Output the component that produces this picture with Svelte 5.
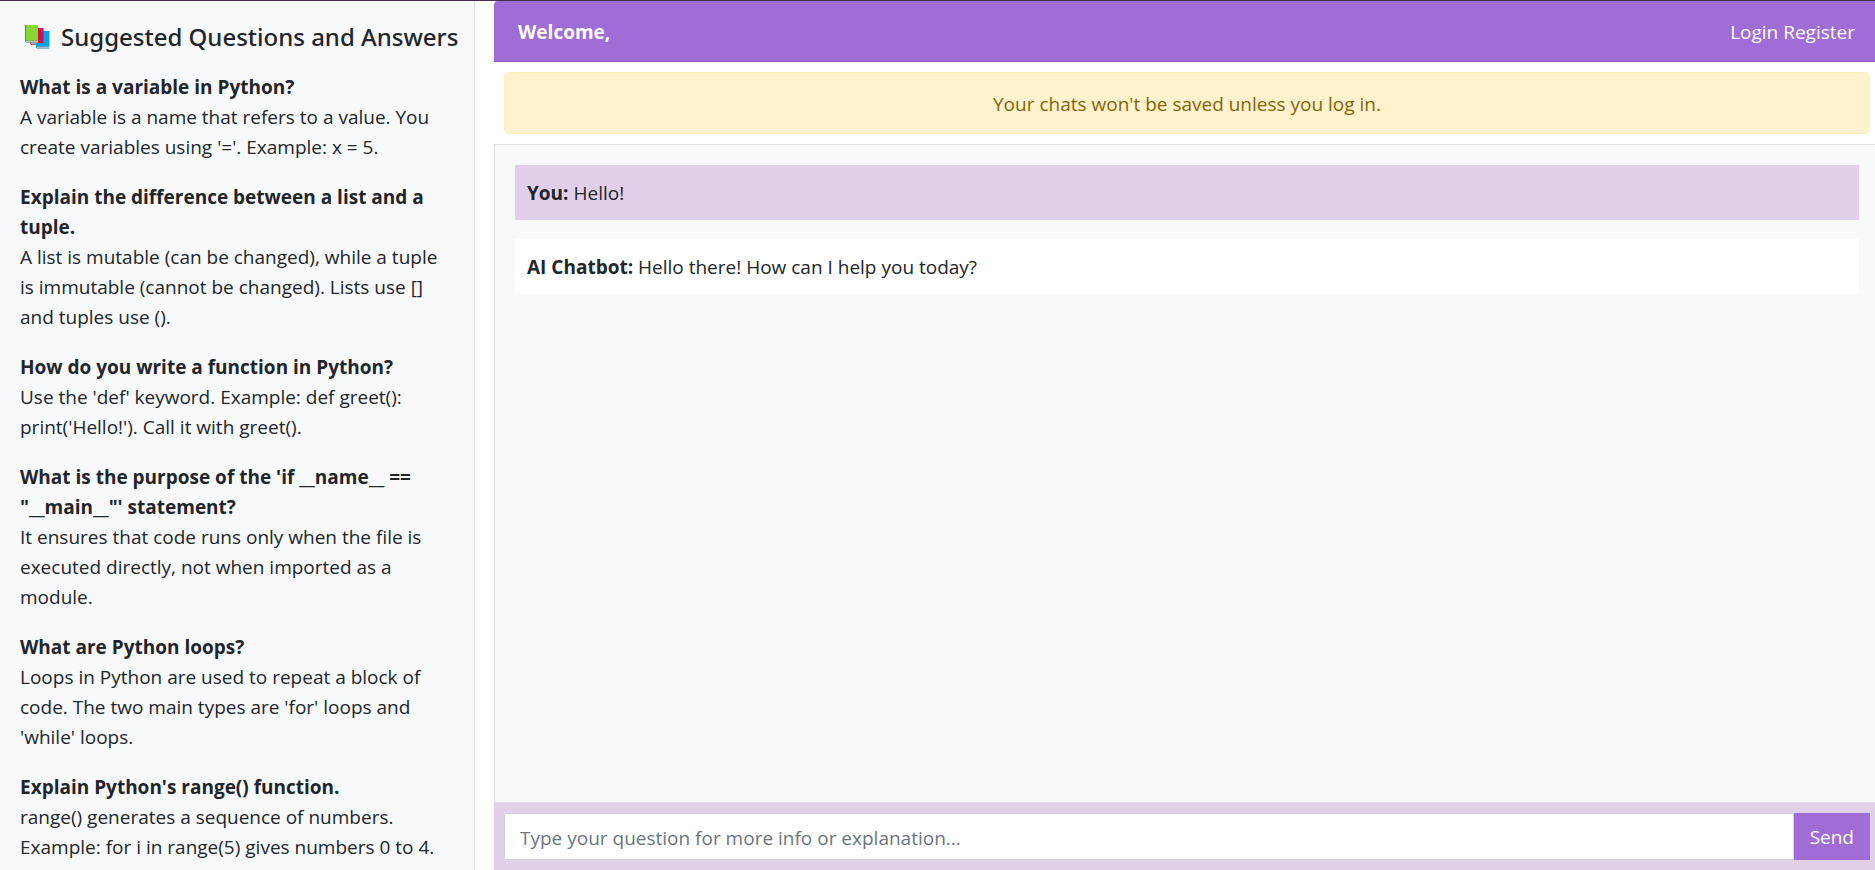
<script>
  const topics = [
    {
      question: 'What is a variable in Python?',
      answer: "A variable is a name that refers to a value. You create variables using '='. Example: x = 5."
    },
    {
      question: 'Explain the difference between a list and a tuple.',
      answer:
        'A list is mutable (can be changed), while a tuple is immutable (cannot be changed). Lists use [] and tuples use ().'
    },
    {
      question: 'How do you write a function in Python?',
      answer: "Use the 'def' keyword. Example: def greet(): print('Hello!'). Call it with greet()."
    },
    {
      question: "What is the purpose of the 'if __name__ == \"__main__\"' statement?",
      answer: 'It ensures that code runs only when the file is executed directly, not when imported as a module.'
    },
    {
      question: 'What are Python loops?',
      answer:
        "Loops in Python are used to repeat a block of code. The two main types are 'for' loops and 'while' loops."
    },
    {
      question: "Explain Python's range() function.",
      answer: 'range() generates a sequence of numbers. Example: for i in range(5) gives numbers 0 to 4.'
    }
  ];

  let messages = $state([
    { from: 'You', text: 'Hello!', own: true },
    { from: 'AI Chatbot', text: 'Hello there! How can I help you today?', own: false }
  ]);
  let draft = $state('');

  function send(event) {
    event.preventDefault();
    const text = draft.trim();
    if (!text) return;
    messages.push({ from: 'You', text, own: true });
    draft = '';
  }
</script>

<div class="page">
  <aside class="sidebar">
    <h2>
      <svg class="books" viewBox="0 0 26 26" aria-hidden="true">
        <path d="M12 7h13.500v15H12z" fill="#00a4ef" />
        <path d="M12 22h13.500v2.500H13L12 23.500z" fill="#c9d3dc" />
        <path d="M12 22h13v.8H13v.9h12.500v.8H13l-1-1z" fill="#3488bb" />
        <path d="M6 4h13.500v15H6z" fill="#d1104f" />
        <path d="M6 18h6v3H7l-1-1z" fill="#dcc5d1" />
        <path d="M6 18h7v.8H7v.9h5v1H7l-1-1z" fill="#a5386a" />
        <path d="M1 1h13v16H1z" fill="#86d72f" />
        <path d="M1 1h1v16H1z" fill="#4a9a20" />
        <path d="M1 16h13v2.500H2l-1-1z" fill="#ccd9ce" />
        <path d="M1 16h13v.8H2v.9h12v.8H2l-1-1z" fill="#6ba157" />
      </svg>
      <span>Suggested Questions and Answers</span>
    </h2>
    {#each topics as topic}
      <section class="topic">
        <h3>{topic.question}</h3>
        <p>{topic.answer}</p>
      </section>
    {/each}
  </aside>

  <main>
    <header>
      <strong>Welcome,</strong>
      <nav><a href="#login">Login</a> <a href="#register">Register</a></nav>
    </header>
    <div class="notice" role="status">Your chats won't be saved unless you log in.</div>
    <div class="chat">
      {#each messages as message}
        <div class="message" class:own={message.own}><strong>{message.from}:</strong> {message.text}</div>
      {/each}
    </div>
    <form onsubmit={send}>
      <input
        type="text"
        aria-label="Your question"
        placeholder="Type your question for more info or explanation..."
        bind:value={draft}
      />
      <button type="submit">Send</button>
    </form>
  </main>
</div>

<style>
  :global(body) {
    margin: 0;
    background: #fff;
  }
  .page,
  .page * {
    box-sizing: border-box;
  }
  .page {
    display: flex;
    gap: 19px;
    height: 100vh;
    overflow: hidden;
    border-top: 1px solid #47304f;
    color: #212529;
    font: 19px/30px 'Segoe UI', 'Open Sans', sans-serif;
  }
  .sidebar {
    flex: 0 0 475px;
    overflow: hidden;
    padding: 20px;
    background: #f8f9fb;
    border-right: 1px solid #dcdee0;
  }
  h2 {
    display: flex;
    align-items: center;
    gap: 11px;
    margin: 0 0 19px;
    padding-left: 4px;
    font-family: 'Segoe UI', 'Noto Sans', 'Open Sans', sans-serif;
    font-size: 24px;
    font-weight: 500;
    line-height: 32px;
    white-space: nowrap;
  }
  .books {
    flex: none;
    width: 26px;
    height: 26px;
  }
  .topic {
    margin-bottom: 20px;
  }
  h3,
  p {
    margin: 0;
    font-size: 19px;
  }
  h3 {
    font-weight: 700;
  }
  main {
    flex: 1;
    min-width: 0;
    display: flex;
    flex-direction: column;
  }
  header {
    display: flex;
    justify-content: space-between;
    padding: 16px 20px 14px 24px;
    color: #fff;
    background: #a06cd5;
    border-bottom: 1px solid #8b5bb8;
    border-top-left-radius: 4px;
  }
  header a {
    color: #fff;
    text-decoration: none;
  }
  .notice {
    margin: 10px 5px 10px 10px;
    padding: 16px 15px 14px;
    text-align: center;
    color: #856404;
    background: #fff2cd;
    border: 1px solid #ffeeba;
    border-radius: 5px;
  }
  .chat {
    flex: 1;
    min-height: 0;
    overflow: hidden;
    padding: 20px 16px 20px 20px;
    background: #f8f9fb;
    border: 1px solid #dcdee0;
    border-right: 0;
  }
  .message {
    margin-bottom: 19px;
    padding: 13px 12px 12px;
    background: #fff;
  }
  .own {
    background: #e2cfea;
  }
  form {
    display: flex;
    padding: 10px 5px 10px 10px;
    background: #e2cfea;
  }
  input {
    flex: 1;
    min-width: 0;
    height: 47px;
    padding: 2px 15px 0;
    font: inherit;
    color: #495057;
    background: #fff;
    border: 1px solid #ced4da;
    border-radius: 0;
  }
  input::placeholder {
    color: #6c757d;
    opacity: 1;
  }
  button {
    padding: 0 15px;
    font: inherit;
    color: #fff;
    background: #a06cd5;
    border: 1px solid #a06cd5;
    border-radius: 0;
  }
</style>
